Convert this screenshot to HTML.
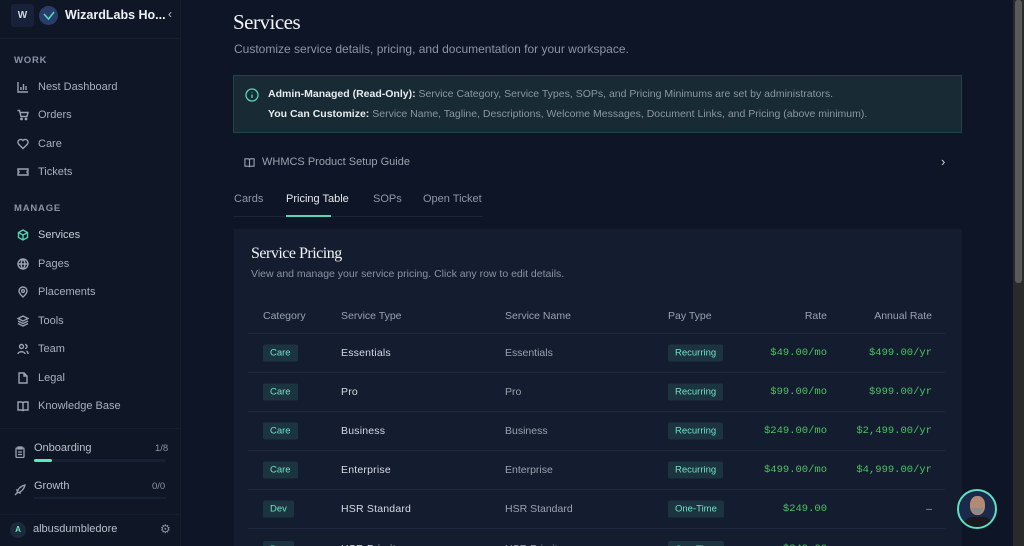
<!DOCTYPE html>
<html><head><meta charset="utf-8"><style>
*{box-sizing:border-box;margin:0;padding:0}
html{width:1024px;height:546px;overflow:hidden}
body{width:1024px;height:546px;overflow:hidden;background:#0e1526;font-family:"Liberation Sans",sans-serif;position:relative;color:#cbd2dc}
.sb{position:absolute;left:0;top:0;width:181px;height:546px;background:#0f1727;border-right:1px solid #151d2d}
.sec{position:absolute;left:14px;font-size:9.5px;letter-spacing:.8px;color:#8a93a3;font-weight:bold}
.it{position:absolute;left:17px;font-size:11px;color:#a8b0bd;display:flex;align-items:center;gap:9px}
.it svg{width:12px;height:12px;stroke:#9aa3b1;fill:none;stroke-width:1.4}
.sc{position:absolute;left:1013px;top:0;width:11px;height:546px;background:#2a2a2a}
.sc div{position:absolute;left:2px;top:0;width:7px;height:283px;background:#5a5a5a;border-radius:3px}
.abs{position:absolute}
.pill{display:inline-block;background:#1c3340;color:#6fe3c6;font-size:9.5px;padding:3px 7px;border-radius:2px}
.row{position:absolute;left:248px;width:697px;height:39px;border-top:1px solid #1e2840;font-size:10.5px;overflow:hidden}
.row>*{position:absolute;top:50%;transform:translateY(-50%)}
.row b{font-weight:normal;color:#d6dbe2;letter-spacing:.2px}
.g{color:#4cc35e;font-family:"Liberation Mono",monospace;font-size:10.5px}
.card{position:absolute;left:234px;top:229px;width:728px;height:317px;background:#141d30;overflow:hidden}
</style></head><body>
<div class="sb">
 <div class="abs" style="left:11px;top:4px;width:23px;height:23px;background:#172238;border-radius:3px;color:#cfd6e0;font-size:10px;font-weight:bold;text-align:center;line-height:23px">W</div>
 <div class="abs" style="left:39px;top:6px;width:19px;height:19px;border-radius:50%;background:#2a3d6a"><svg width="19" height="19" viewBox="0 0 19 19"><path d="M5 8l4.5 5L15 6" stroke="#4fd7c0" stroke-width="1.6" fill="none"/></svg></div>
 <div class="abs" style="left:65px;top:8px;font-size:12.5px;font-weight:bold;color:#eef1f5">WizardLabs Ho...</div>
 <div class="abs" style="left:168px;top:7px;font-size:12px;color:#c0c6cf">‹</div>
 <div class="abs" style="left:0;top:38px;width:181px;border-top:1px solid #151e2e"></div>
 <div class="sec" style="top:55px">WORK</div>
 <div class="it" style="top:81px"><svg viewBox="0 0 12 12"><path d="M1 1v10h10M4 9V6M6.5 9V3M9 9V5"/></svg>Nest Dashboard</div>
 <div class="it" style="top:109px"><svg viewBox="0 0 12 12"><path d="M0.5 1.5h2l1.5 6h6l1-4H3"/><circle cx="4.5" cy="10" r=".7"/><circle cx="9" cy="10" r=".7"/></svg>Orders</div>
 <div class="it" style="top:138px"><svg viewBox="0 0 12 12"><path d="M6 10.5L1.5 6a2.5 2.5 0 014.5-3.5A2.5 2.5 0 0110.5 6z"/></svg>Care</div>
 <div class="it" style="top:166px"><svg viewBox="0 0 12 12"><path d="M1 3h10v2a1 1 0 000 2v2H1V7a1 1 0 000-2z"/></svg>Tickets</div>
 <div class="sec" style="top:203px">MANAGE</div>
 <div class="it" style="top:229px;color:#c6ccd6"><svg viewBox="0 0 12 12" style="stroke:#4fd7b4"><path d="M6 1l4.5 2.5v5L6 11 1.5 8.5v-5zM1.5 3.5L6 6l4.5-2.5M6 6v5"/></svg>Services</div>
 <div class="it" style="top:258px"><svg viewBox="0 0 12 12"><circle cx="6" cy="6" r="5"/><path d="M1 6h10M6 1c-2.5 3-2.5 7 0 10M6 1c2.5 3 2.5 7 0 10"/></svg>Pages</div>
 <div class="it" style="top:286px"><svg viewBox="0 0 12 12"><path d="M6 11S2 7.5 2 5a4 4 0 018 0c0 2.5-4 6-4 6z"/><circle cx="6" cy="5" r="1.4"/></svg>Placements</div>
 <div class="it" style="top:315px"><svg viewBox="0 0 12 12"><path d="M6 1l5 2.5L6 6 1 3.5zM1 6l5 2.5L11 6M1 8.5L6 11l5-2.5"/></svg>Tools</div>
 <div class="it" style="top:343px"><svg viewBox="0 0 12 12"><circle cx="4.5" cy="3.5" r="2"/><path d="M1 11c0-3 7-3 7 0M8 1.5a2 2 0 010 4M9.5 8c1 .5 1.5 1.5 1.5 3"/></svg>Team</div>
 <div class="it" style="top:372px"><svg viewBox="0 0 12 12"><path d="M2 1h5l3 3v7H2zM7 1v3h3"/></svg>Legal</div>
 <div class="it" style="top:400px"><svg viewBox="0 0 12 12"><path d="M1 2h3.5A1.5 1.5 0 016 3.5V11a1.5 1.5 0 00-1.5-1H1zM11 2H7.5A1.5 1.5 0 006 3.5V11a1.5 1.5 0 011.5-1H11z"/></svg>Knowledge Base</div>
 <div class="abs" style="left:0;top:428px;width:181px;border-top:1px solid #151e2e"></div>
 <svg class="abs" style="left:14px;top:446px" width="12" height="12" viewBox="0 0 12 12" fill="none" stroke="#9aa3b1" stroke-width="1.3"><rect x="2" y="2" width="8" height="9.5" rx="1"/><path d="M4 1h4v2H4zM4 6h4M4 8.5h4"/></svg>
 <div class="abs" style="left:34px;top:442px;font-size:11px;color:#b8c0cc">Onboarding</div>
 <div class="abs" style="left:155px;top:443px;font-size:9.5px;color:#8d95a3">1/8</div>
 <div class="abs" style="left:34px;top:459px;width:132px;height:3px;background:#172133;border-radius:2px"><div style="width:18px;height:3px;background:#5ee7c0;border-radius:2px"></div></div>
 <svg class="abs" style="left:14px;top:484px" width="12" height="12" viewBox="0 0 12 12" fill="none" stroke="#9aa3b1" stroke-width="1.3"><path d="M3 9c1-5 4-7 8-8-1 4-3 7-8 8zM3 9l-2 2M4 6L2 6M6 8v2"/></svg>
 <div class="abs" style="left:34px;top:480px;font-size:11px;color:#b8c0cc">Growth</div>
 <div class="abs" style="left:152px;top:481px;font-size:9.5px;color:#8d95a3">0/0</div>
 <div class="abs" style="left:34px;top:497px;width:132px;height:2px;background:#172133"></div>
 <div class="abs" style="left:0;top:514px;width:181px;border-top:1px solid #151e2e"></div>
 <div class="abs" style="left:10px;top:522px;width:16px;height:16px;border-radius:50%;background:#1a2a3a;color:#6fe3c6;font-size:8px;font-weight:bold;text-align:center;line-height:16px">A</div>
 <div class="abs" style="left:33px;top:523px;font-size:11px;color:#b8c0cc">albusdumbledore</div>
 <div class="abs" style="left:160px;top:522px;font-size:12px;color:#8a93a3">⚙</div>
</div>
<div class="abs" style="left:233px;top:10px;font-family:'Liberation Serif',serif;font-size:21px;color:#f1f3f6;letter-spacing:-.5px">Services</div>
<div class="abs" style="left:234px;top:42px;font-size:12px;color:#8c95a4">Customize service details, pricing, and documentation for your workspace.</div>
<div class="abs" style="left:233px;top:75px;width:729px;height:58px;background:#182a33;border:1px solid #23454a"></div>
<svg class="abs" style="left:245px;top:88px" width="14" height="14" viewBox="0 0 14 14" fill="none" stroke="#55d8b4" stroke-width="1.3"><circle cx="7" cy="7" r="6"/><path d="M7 6.5v3.5M7 4v.5"/></svg>
<div class="abs" style="left:268px;top:88px;font-size:10.5px;color:#8c96a4"><b style="color:#e8ecf0">Admin-Managed (Read-Only):</b> Service Category, Service Types, SOPs, and Pricing Minimums are set by administrators.</div>
<div class="abs" style="left:268px;top:108px;font-size:10.5px;color:#8c96a4"><b style="color:#e8ecf0">You Can Customize:</b> Service Name, Tagline, Descriptions, Welcome Messages, Document Links, and Pricing (above minimum).</div>
<svg class="abs" style="left:244px;top:157px" width="11" height="11" viewBox="0 0 12 12" fill="none" stroke="#9aa3b1" stroke-width="1.2"><path d="M1 2h3.5A1.5 1.5 0 016 3.5V11a1.5 1.5 0 00-1.5-1H1zM11 2H7.5A1.5 1.5 0 006 3.5V11a1.5 1.5 0 011.5-1H11z"/></svg>
<div class="abs" style="left:262px;top:156px;font-size:11px;color:#9ba3b0">WHMCS Product Setup Guide</div>
<div class="abs" style="left:941px;top:154px;font-size:13px;color:#d0d5dc">›</div>
<div class="abs" style="left:234px;top:193px;font-size:11px;color:#8f98a6">Cards</div>
<div class="abs" style="left:286px;top:193px;font-size:11px;color:#e6e9ee">Pricing Table</div>
<div class="abs" style="left:373px;top:193px;font-size:11px;color:#8f98a6">SOPs</div>
<div class="abs" style="left:423px;top:193px;font-size:11px;color:#8f98a6">Open Ticket</div>
<div class="abs" style="left:233px;top:216px;width:250px;height:1px;background:#1b2438"></div>
<div class="abs" style="left:286px;top:215px;width:45px;height:2px;background:#5ad4b2"></div>
<div class="card">
<div class="abs" style="left:17px;top:16px;font-family:'Liberation Serif',serif;font-size:16px;color:#f1f3f6;letter-spacing:-.5px">Service Pricing</div>
<div class="abs" style="left:17px;top:39px;font-size:10.5px;color:#8a93a2">View and manage your service pricing. Click any row to edit details.</div>
<div class="abs" style="left:29px;top:81px;font-size:10.5px;color:#9aa2af">Category</div>
<div class="abs" style="left:107px;top:81px;font-size:10.5px;color:#9aa2af">Service Type</div>
<div class="abs" style="left:271px;top:81px;font-size:10.5px;color:#9aa2af">Service Name</div>
<div class="abs" style="left:434px;top:81px;font-size:10.5px;color:#9aa2af">Pay Type</div>
<div class="abs" style="left:526px;top:81px;width:67px;text-align:right;font-size:10.5px;color:#9aa2af">Rate</div>
<div class="abs" style="left:606px;top:81px;width:92px;text-align:right;font-size:10.5px;color:#9aa2af">Annual Rate</div>
</div>
<div class="row" style="top:333px"><span class="pill" style="left:15px">Care</span><b style="left:93px">Essentials</b><span style="left:257px;color:#9aa2af">Essentials</span><span class="pill" style="left:420px">Recurring</span><span class="g" style="right:118px">$49.00/mo</span><span class="g" style="right:13px">$499.00/yr</span></div>
<div class="row" style="top:372px"><span class="pill" style="left:15px">Care</span><b style="left:93px">Pro</b><span style="left:257px;color:#9aa2af">Pro</span><span class="pill" style="left:420px">Recurring</span><span class="g" style="right:118px">$99.00/mo</span><span class="g" style="right:13px">$999.00/yr</span></div>
<div class="row" style="top:411px"><span class="pill" style="left:15px">Care</span><b style="left:93px">Business</b><span style="left:257px;color:#9aa2af">Business</span><span class="pill" style="left:420px">Recurring</span><span class="g" style="right:118px">$249.00/mo</span><span class="g" style="right:13px">$2,499.00/yr</span></div>
<div class="row" style="top:450px"><span class="pill" style="left:15px">Care</span><b style="left:93px">Enterprise</b><span style="left:257px;color:#9aa2af">Enterprise</span><span class="pill" style="left:420px">Recurring</span><span class="g" style="right:118px">$499.00/mo</span><span class="g" style="right:13px">$4,999.00/yr</span></div>
<div class="row" style="top:489px"><span class="pill" style="left:15px">Dev</span><b style="left:93px">HSR Standard</b><span style="left:257px;color:#9aa2af">HSR Standard</span><span class="pill" style="left:420px">One-Time</span><span class="g" style="right:118px">$249.00</span><span style="right:13px;color:#9aa2af">–</span></div>
<div class="row" style="top:528px;height:18px"><span class="pill" style="left:15px;top:12px;transform:none">Dev</span><b style="left:93px;top:14px;transform:none">HSR Priority</b><span style="left:257px;top:14px;transform:none;color:#9aa2af">HSR Priority</span><span class="pill" style="left:420px;top:12px;transform:none">One-Time</span><span class="g" style="right:118px;top:14px;transform:none">$349.00</span></div>
<div class="abs" style="left:957px;top:489px;width:40px;height:40px;border-radius:50%;border:2px solid #5ee0c0;background:#1b2a4a;overflow:hidden">
 <div style="position:absolute;left:11px;top:5px;width:15px;height:19px;border-radius:45%;background:#b48a74"></div>
 <div style="position:absolute;left:13px;top:17px;width:11px;height:6px;border-radius:0 0 6px 6px;background:#8a8a88"></div>
 <div style="position:absolute;left:4px;top:26px;width:30px;height:10px;border-radius:10px 10px 0 0;background:#1a1a1e"></div>
</div>
<div class="sc"><div></div></div>
</body></html>
